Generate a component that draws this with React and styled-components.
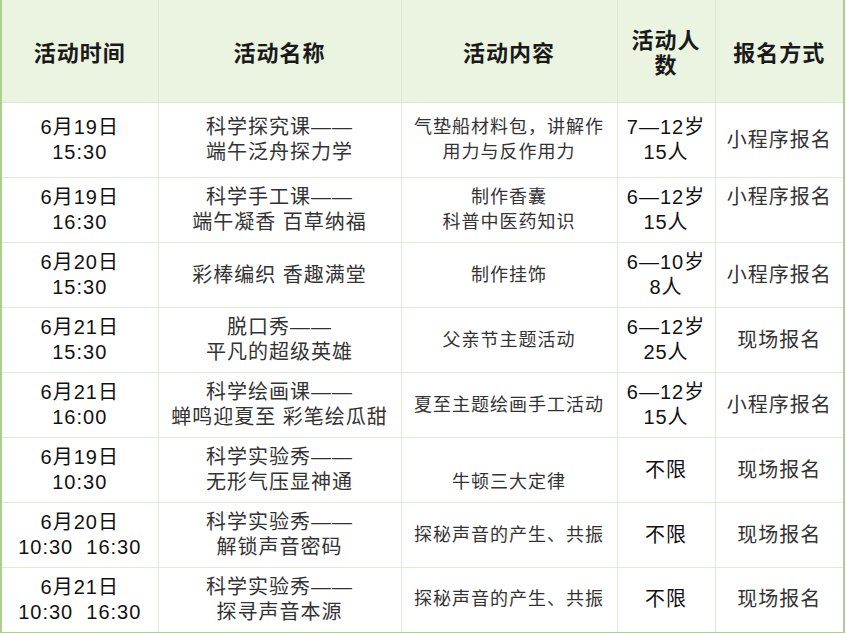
import React from "react";
import styled, { createGlobalStyle } from "styled-components";

const rows = [
  { time: ["6月19日", "15:30"], name: ["科学探究课——", "端午泛舟探力学"], content: ["气垫船材料包，讲解作", "用力与反作用力"], people: ["7—12岁", "15人"], signup: ["小程序报名"], tall: true },
  { time: ["6月19日", "16:30"], name: ["科学手工课——", "端午凝香 百草纳福"], content: ["制作香囊", "科普中医药知识"], people: ["6—12岁", "15人"], signup: ["小程序报名", "\u00a0"] },
  { time: ["6月20日", "15:30"], name: ["彩棒编织 香趣满堂"], content: ["制作挂饰"], people: ["6—10岁", "8人"], signup: ["小程序报名"] },
  { time: ["6月21日", "15:30"], name: ["脱口秀——", "平凡的超级英雄"], content: ["父亲节主题活动"], people: ["6—12岁", "25人"], signup: ["现场报名"] },
  { time: ["6月21日", "16:00"], name: ["科学绘画课——", "蝉鸣迎夏至 彩笔绘瓜甜"], content: ["夏至主题绘画手工活动"], people: ["6—12岁", "15人"], signup: ["小程序报名"] },
  { time: ["6月19日", "10:30"], name: ["科学实验秀——", "无形气压显神通"], content: ["\u00a0", "牛顿三大定律"], people: ["不限"], signup: ["现场报名"] },
  { time: ["6月20日", "10:30\u00a0\u00a016:30"], name: ["科学实验秀——", "解锁声音密码"], content: ["探秘声音的产生、共振"], people: ["不限"], signup: ["现场报名"] },
  { time: ["6月21日", "10:30\u00a0\u00a016:30"], name: ["科学实验秀——", "探寻声音本源"], content: ["探秘声音的产生、共振"], people: ["不限"], signup: ["现场报名"] },
];

const Lines = ({ items }) =>
  items.map((t, i) => (
    <React.Fragment key={i}>
      {i > 0 && <br />}
      {t}
    </React.Fragment>
  ));

export default function App() {
  return (
    <>
      <GlobalStyle />
      <Table>
        <colgroup>
          <col style={{ width: 157 }} />
          <col style={{ width: 243 }} />
          <col style={{ width: 216 }} />
          <col style={{ width: 98 }} />
          <col />
        </colgroup>
        <thead>
          <tr>
            <Head>活动时间</Head>
            <Head>活动名称</Head>
            <Head>活动内容</Head>
            <Head>活动人数</Head>
            <Head>报名方式</Head>
          </tr>
        </thead>
        <tbody>
          {rows.map((r, i) => (
            <Row key={i} $tall={r.tall}>
              <Cell><Lines items={r.time} /></Cell>
              <Cell $muted><Lines items={r.name} /></Cell>
              <Cell $small $muted><Lines items={r.content} /></Cell>
              <Cell><Lines items={r.people} /></Cell>
              <Cell $muted><Lines items={r.signup} /></Cell>
            </Row>
          ))}
        </tbody>
      </Table>
    </>
  );
}

const GlobalStyle = createGlobalStyle`
  body {
    margin: 0;
    background: #fff;
    font-family: "Liberation Sans", "Noto Sans CJK SC", sans-serif;
  }
`;

const Table = styled.table`
  width: 845px;
  table-layout: fixed;
  border-collapse: collapse;
  border-left: 2px solid #a9d18e;
  border-right: 2px solid #a9d18e;
  border-bottom: 2px solid #a9d18e;
`;

const Head = styled.th`
  height: 102px;
  padding: 0 6px;
  background: #ebf4e0;
  border: 1px solid #dde8d2;
  border-top: none;
  font-family: "Noto Sans CJK SC", sans-serif;
  font-size: 22px;
  font-weight: 700;
  letter-spacing: 1px;
  line-height: 25px;
  color: #1a1a1a;
  text-align: center;
  vertical-align: middle;
`;

const Row = styled.tr`
  height: ${(p) => (p.$tall ? "75px" : "65px")};
`;

const Cell = styled.td`
  padding: 0 4px;
  border: 1px solid #e1e9d9;
  text-align: center;
  vertical-align: middle;
  font-size: ${(p) => (p.$small ? "18px" : "20px")};
  letter-spacing: 1px;
  line-height: 25px;
  color: ${(p) => (p.$muted ? "#333" : "#111")};
  white-space: nowrap;
`;
